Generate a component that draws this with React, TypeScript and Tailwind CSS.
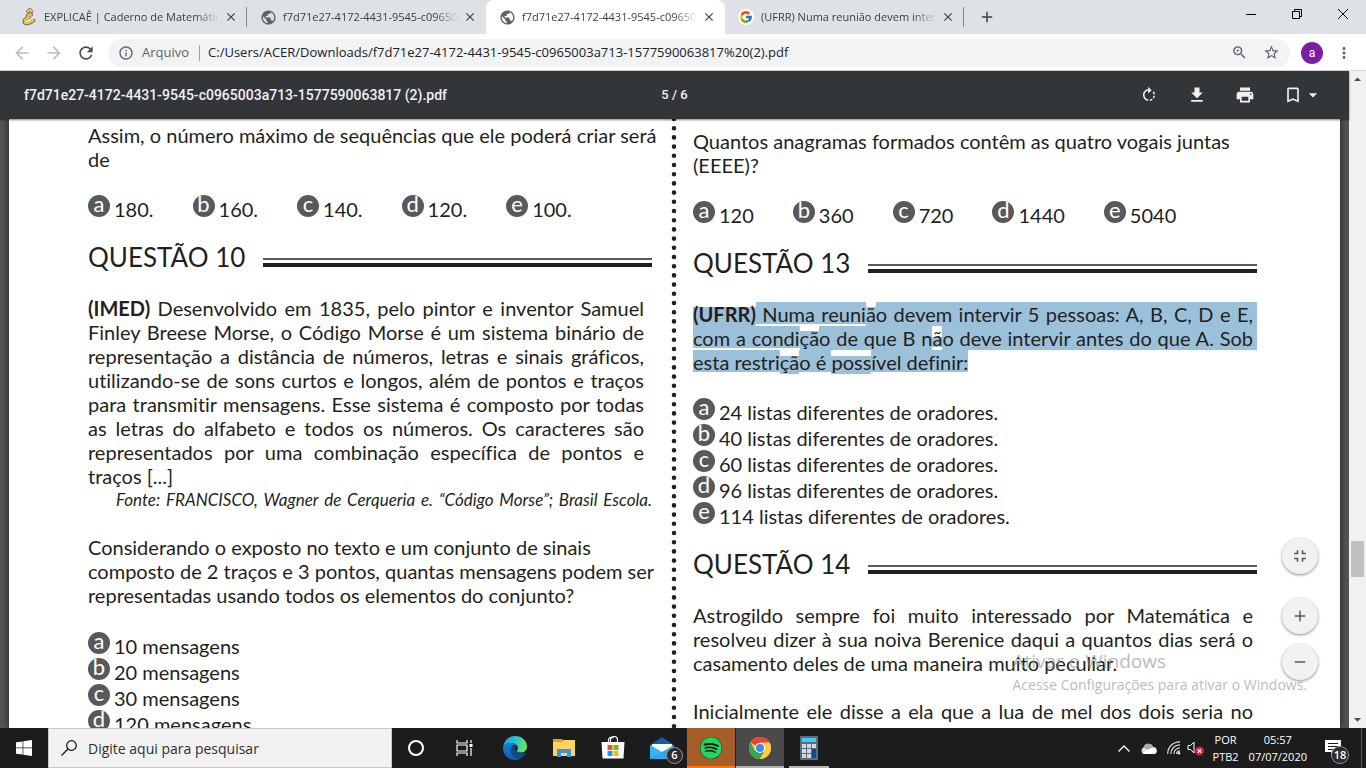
import type { ReactNode } from 'react';
import {
  MdAdd,
  MdArrowBack,
  MdArrowDropDown,
  MdArrowDropUp,
  MdArrowForward,
  MdBookmarkBorder,
  MdClose,
  MdFullscreenExit,
  MdGetApp,
  MdInfoOutline,
  MdMoreVert,
  MdPrint,
  MdPublic,
  MdRefresh,
  MdRemove,
  MdRotateRight,
  MdStarBorder,
  MdZoomIn,
} from 'react-icons/md';
import { FcGoogle } from 'react-icons/fc';
import { FaSpotify } from 'react-icons/fa';

const PDF_NAME = 'f7d71e27-4172-4431-9545-c0965003a713-1577590063817';

function ExplicaeIcon() {
  return (
    <svg viewBox="0 0 16 18" className="h-[18px] w-4" fill="none" strokeLinecap="round" strokeLinejoin="round">
      <path d="M6.500 3.500L9 1.500L11 3.500M10.500 7C11 5 6.500 5.500 6 8.500C6 10 8.500 9.500 8.500 9.500C4.500 10 2.500 12 3 14C3.500 17 9 16 13 12.500" stroke="#7b6a8e" strokeWidth="3" />
      <path d="M6.500 3.500L9 1.800L11 3.500M10 7C10.500 5.500 6.800 6 6.500 8.500C6.500 9.800 8.500 9.500 8.500 9.500C5 10 3.200 12 3.600 14C4 16.200 9 15.300 12.500 12.500" stroke="#f7d417" strokeWidth="1.800" />
    </svg>
  );
}

const tabs = [
  { icon: <ExplicaeIcon />, title: 'EXPLICAÊ | Caderno de Matemática' },
  { icon: <MdPublic className="size-[17px] text-[#5f6368]" />, title: PDF_NAME },
  { icon: <MdPublic className="size-[17px] text-[#5f6368]" />, title: PDF_NAME, active: true },
  {
    icon: (
      <span className="flex size-4 items-center justify-center rounded-full bg-white">
        <FcGoogle className="size-3.5" />
      </span>
    ),
    title: '(UFRR) Numa reunião devem intervir',
  },
];

function TabStrip() {
  return (
    <div className="flex h-[34px] shrink-0 bg-[#dee1e6] pl-2">
      {tabs.map((tab, i) => (
        <div key={i} className={`relative flex w-[239px] min-w-0 items-center pl-3 ${tab.active ? 'rounded-t-lg bg-white' : ''}`}>
          <span className="flex w-[18px] shrink-0 justify-center">{tab.icon}</span>
          <span className="ml-1.5 w-[176px] overflow-hidden whitespace-nowrap text-[11px] text-[#3c4043] [mask-image:linear-gradient(to_right,#000_86%,transparent)]">
            {tab.title}
          </span>
          <button aria-label="Fechar guia" className="ml-1 shrink-0">
            <MdClose className="size-3.5 text-[#3c4043]" />
          </button>
          {(i === 0 || i === 3) && <span className="absolute right-0 top-[7px] h-5 w-px bg-[#80868b]" />}
        </div>
      ))}
      <button aria-label="Nova guia" className="ml-3.5">
        <MdAdd className="size-[18px] text-[#3c4043]" />
      </button>
      <div className="ml-auto flex h-7">
        <button aria-label="Minimizar" className="flex w-[46px] items-center justify-center">
          <span className="h-px w-2.5 bg-black" />
        </button>
        <button aria-label="Restaurar" className="flex w-[46px] items-center justify-center">
          <svg viewBox="0 0 10 10" className="size-2.5" fill="none" stroke="#000">
            <path d="M.5 2.500h7v7h-7zM2.500 2.500v-2h7v7h-2" />
          </svg>
        </button>
        <button aria-label="Fechar" className="flex w-[46px] items-center justify-center">
          <svg viewBox="0 0 10 10" className="size-2.5" stroke="#000">
            <path d="M0 0l10 10M10 0L0 10" />
          </svg>
        </button>
      </div>
    </div>
  );
}

function Toolbar() {
  return (
    <div className="flex h-[37px] shrink-0 items-center border-b border-[#d5d7da] bg-white pl-3 pt-px text-[#5f6368]">
      <button aria-label="Voltar" className="text-[#babcbe]">
        <MdArrowBack className="size-5" />
      </button>
      <button aria-label="Avançar" className="ml-3 text-[#babcbe]">
        <MdArrowForward className="size-5" />
      </button>
      <button aria-label="Recarregar" className="ml-3 text-[#4a4d51]">
        <MdRefresh className="size-5" />
      </button>
      <div className="ml-3 flex h-7 min-w-0 flex-1 items-center rounded-full bg-[#f1f3f4] pl-2.5 pr-2.5">
        <MdInfoOutline className="size-4 shrink-0" />
        <span className="ml-2 text-[13px]">Arquivo</span>
        <span className="ml-2.5 h-4 w-px bg-[#9aa0a6]" />
        <input
          aria-label="Barra de endereço"
          className="ml-2 min-w-0 flex-1 bg-transparent text-[13px] text-[#202124] outline-none"
          defaultValue={`C:/Users/ACER/Downloads/${PDF_NAME}%20(2).pdf`}
        />
        <button aria-label="Zoom">
          <MdZoomIn className="size-[17px]" />
        </button>
        <button aria-label="Adicionar aos favoritos" className="ml-[15px]">
          <MdStarBorder className="size-[17px]" />
        </button>
      </div>
      <button className="ml-[11px] size-[22px] rounded-full bg-[#7b1fa2] font-['Roboto',sans-serif] text-[12px] leading-none text-white">
        a
      </button>
      <button aria-label="Menu" className="ml-3 mr-[13px]">
        <MdMoreVert className="size-[18px]" />
      </button>
    </div>
  );
}

function PdfToolbar() {
  return (
    <div className="z-10 flex h-12 shrink-0 items-center bg-[#323639] px-6 font-['Roboto',sans-serif] text-[14px] font-medium text-[#f1f1f1] shadow-[0_1px_2px_rgba(0,0,0,0.5)]">
      <span className="flex-1">{PDF_NAME} (2).pdf</span>
      <span className="text-[13px]">5 / 6</span>
      <div className="flex flex-1 items-center justify-end">
        <button aria-label="Girar">
          <MdRotateRight className="size-[18px]" />
        </button>
        <button aria-label="Baixar" className="ml-[29px]">
          <MdGetApp className="size-5" />
        </button>
        <button aria-label="Imprimir" className="ml-7">
          <MdPrint className="size-5" />
        </button>
        <button aria-label="Favoritos" className="ml-7 mr-0.5 flex items-center">
          <MdBookmarkBorder className="size-5" />
          <MdArrowDropDown className="size-5" />
        </button>
      </div>
    </div>
  );
}

function Heading({ children }: { children: ReactNode }) {
  return (
    <div className="flex gap-[18px]">
      <h2 className="text-[26px] leading-8">{children}</h2>
      <span className="mb-1.5 h-[9px] flex-1 self-end border-b-4 border-t-2 border-b-[#231f20] border-t-[#58595b]" />
    </div>
  );
}

function Letter({ children }: { children: string }) {
  return (
    <span className="flex size-[22px] shrink-0 items-center justify-center rounded-full bg-[#58595b] pb-1 text-[22px] leading-none text-white">
      {children}
    </span>
  );
}

function Options({ items, inline }: { items: string[]; inline?: boolean }) {
  return (
    <ul className={inline ? 'flex gap-[39px]' : ''}>
      {items.map((item, i) => (
        <li key={item} className="flex h-[26px] gap-1">
          <Letter>{'abcde'[i]}</Letter>
          <span className="whitespace-nowrap pt-0.5">{item}</span>
        </li>
      ))}
    </ul>
  );
}

// One printed line per entry, stretched to both margins
function Justified({ lines, last }: { lines: ReactNode[]; last?: ReactNode }) {
  return (
    <p>
      {lines.map((line, i) => (
        <span key={i} className="block whitespace-nowrap [text-align-last:justify]">
          {line}
        </span>
      ))}
      {last && <span className="block whitespace-nowrap">{last}</span>}
    </p>
  );
}

// Highlight boxes follow the font's glyph runs, so their heights differ
const marks = {
  full: 'bg-[#9bc1da]',
  top: 'bg-[linear-gradient(#9bc1da,#9bc1da)] bg-[length:100%_22px] bg-top bg-no-repeat',
  low: 'bg-[linear-gradient(#9bc1da,#9bc1da)] bg-[length:100%_19px] bg-bottom bg-no-repeat',
  mid: 'bg-[linear-gradient(#9bc1da,#9bc1da)] bg-[length:100%_10px] bg-[position:0_11px] bg-no-repeat',
  drop: 'bg-[linear-gradient(#9bc1da,#9bc1da)] bg-[length:100%_18px] bg-bottom bg-no-repeat',
  end: 'bg-[#9bc1da] pr-1 -mr-1',
};

function Mark({ kind, children }: { kind: keyof typeof marks; children: ReactNode }) {
  return <span className={marks[kind]}>{children}</span>;
}

function LeftColumn() {
  return (
    <div className="min-w-0 pt-1">
      <p className="whitespace-nowrap">
        Assim, o número máximo de sequências que ele poderá criar será
        <br />
        de
      </p>
      <div className="mt-6">
        <Options inline items={['180.', '160.', '140.', '120.', '100.']} />
      </div>
      <div className="mt-5">
        <Heading>QUESTÃO 10</Heading>
      </div>
      <div className="mt-[23px] pr-2">
        <Justified
          lines={[
            <><b>(IMED)</b> Desenvolvido em 1835, pelo pintor e inventor Samuel</>,
            'Finley Breese Morse, o Código Morse é um sistema binário de',
            'representação a distância de números, letras e sinais gráficos,',
            'utilizando-se de sons curtos e longos, além de pontos e traços',
            'para transmitir mensagens. Esse sistema é composto por todas',
            'as letras do alfabeto e todos os números. Os caracteres são',
            'representados por uma combinação específica de pontos e',
          ]}
          last="traços [...]"
        />
      </div>
      <p className="ml-7 mt-0.5 whitespace-nowrap text-[17px] italic leading-5 [text-align-last:justify]">
        Fonte: FRANCISCO, Wagner de Cerqueria e. “Código Morse”; Brasil Escola.
      </p>
      <p className="mt-[25px] whitespace-nowrap">
        Considerando o exposto no texto e um conjunto de sinais
        <br />
        composto de 2 traços e 3 pontos, quantas mensagens podem ser
        <br />
        representadas usando todos os elementos do conjunto?
      </p>
      <div className="mt-[25px]">
        <Options items={['10 mensagens', '20 mensagens', '30 mensagens', '120 mensagens']} />
      </div>
    </div>
  );
}

function RightColumn() {
  return (
    <div className="min-w-0 pt-2.5">
      <p>Quantos anagramas formados contêm as quatro vogais juntas (EEEE)?</p>
      <div className="mt-6">
        <Options inline items={['120', '360', '720', '1440', '5040']} />
      </div>
      <div className="mt-5">
        <Heading>QUESTÃO 13</Heading>
      </div>
      <div className="mt-[23px] pr-1">
        <Justified
          lines={[
            <>
              <Mark kind="low"><b>(UFRR)</b></Mark>
              <Mark kind="top"> Numa reuni</Mark>
              <Mark kind="low">ã</Mark>
              <Mark kind="end">o devem intervir 5 pessoas: A, B, C, D e E,</Mark>
            </>,
            <>
              <Mark kind="top">com a condi</Mark>
              <Mark kind="low">çã</Mark>
              <Mark kind="full">o de que B n</Mark>
              <Mark kind="mid">ã</Mark>
              <Mark kind="end">o deve intervir antes do que A. Sob</Mark>
            </>,
          ]}
          last={
            <>
              <Mark kind="top">esta restri</Mark>
              <Mark kind="drop">çã</Mark>
              <Mark kind="top">o é </Mark>
              <Mark kind="drop">poss</Mark>
              <Mark kind="top">ível definir:</Mark>
            </>
          }
        />
      </div>
      <div className="mt-6">
        <Options
          items={[
            '24 listas diferentes de oradores.',
            '40 listas diferentes de oradores.',
            '60 listas diferentes de oradores.',
            '96 listas diferentes de oradores.',
            '114 listas diferentes de oradores.',
          ]}
        />
      </div>
      <div className="mt-5">
        <Heading>QUESTÃO 14</Heading>
      </div>
      <div className="mt-[23px] pr-1">
        <Justified
          lines={[
            'Astrogildo sempre foi muito interessado por Matemática e',
            'resolveu dizer à sua noiva Berenice daqui a quantos dias será o',
          ]}
          last="casamento deles de uma maneira muito peculiar."
        />
      </div>
      <div className="mt-6 pr-1">
        <Justified lines={['Inicialmente ele disse a ela que a lua de mel dos dois seria no']} />
      </div>
    </div>
  );
}

function ZoomControls() {
  const round =
    'flex size-9 items-center justify-center rounded-full bg-[#f2f2f2] text-[#5a5a5a] shadow-[0_1px_3px_rgba(0,0,0,0.45)]';
  return (
    <div className="absolute bottom-12 right-[31px] flex flex-col">
      <button aria-label="Ajustar à página" className={round}>
        <MdFullscreenExit className="size-5" />
      </button>
      <button aria-label="Mais zoom" className={`mt-6 ${round}`}>
        <MdAdd className="size-[18px]" />
      </button>
      <button aria-label="Menos zoom" className={`mt-2.5 ${round}`}>
        <MdRemove className="size-[18px]" />
      </button>
    </div>
  );
}

function PdfViewer() {
  return (
    <div className="relative flex min-w-0 flex-1 flex-col">
      <PdfToolbar />
      <div className="min-h-0 flex-1 overflow-hidden bg-[#525659] px-[9px]">
        <div className="grid h-full grid-cols-[minmax(0,1fr)_41px_minmax(0,1fr)] bg-white pl-[79px] pr-[83px] font-['Lato',sans-serif] text-[20px] leading-6 text-[#231f20] shadow-[0_0_8px_rgba(0,0,0,0.7)] [font-variant-ligatures:none]">
          <LeftColumn />
          <svg className="h-full w-full overflow-visible">
            <line x1="22" y1="0" x2="22" y2="100%" stroke="#231f20" strokeWidth="4.600" strokeLinecap="round" strokeDasharray="0 9.200" />
          </svg>
          <RightColumn />
        </div>
      </div>
      <ZoomControls />
      <div className="pointer-events-none absolute bottom-[33px] right-[42px] text-[#8a8a8a]/60">
        <p className="text-[19px] leading-7">Ativar o Windows</p>
        <p className="text-[14px] leading-5">Acesse Configurações para ativar o Windows.</p>
      </div>
    </div>
  );
}

function Scrollbar() {
  return (
    <div className="flex w-[17px] shrink-0 flex-col items-center bg-[#f1f1f1] text-[#505050]">
      <MdArrowDropUp className="size-[17px] shrink-0" />
      <span className="grow-[453]" />
      <span className="h-9 w-[13px] bg-[#c1c1c1]" />
      <span className="grow-[134]" />
      <MdArrowDropDown className="size-[17px] shrink-0" />
    </div>
  );
}

function EdgeIcon() {
  return (
    <svg viewBox="0 0 24 24" className="size-6">
      <defs>
        <linearGradient id="edgeTop" x1="0" y1=".3" x2="1" y2=".5">
          <stop offset="0" stopColor="#1b9de2" />
          <stop offset=".5" stopColor="#2cc3d5" />
          <stop offset="1" stopColor="#6be35e" />
        </linearGradient>
        <linearGradient id="edgeLow" x1="0" y1="0" x2=".6" y2="1">
          <stop offset="0" stopColor="#1684d8" />
          <stop offset="1" stopColor="#0c59a4" />
        </linearGradient>
      </defs>
      <path d="M.2 10.500C1 4.500 6 0 12 0c7 0 12 5 12 10.500 0 4-3 6-6.200 6-2.500 0-4-.8-4-1.600 0-.6 1-1.200 1-3C14.800 9.500 12.500 7 8.500 7 4 7 1 9.500.2 10.500z" fill="url(#edgeTop)" />
      <path d="M.1 11C1 8.500 4.500 7 8 7c2.500 0 4.500.8 5.600 2.200C10.500 8.500 8 10.500 8 14c0 5 5 9 10.500 7.800C16.500 23.200 14.300 24 12 24 5 24-.6 18.500.1 11z" fill="url(#edgeLow)" />
      <path d="M13.600 9.200C10 9 8 11.300 8 14.500c0 5 5.500 9 10.700 7 1.800-1 3.200-2.500 4.200-4.200.2-.5-.2-.7-.7-.5-5.200 2-9.700-.3-10-3.800-.1-1.700.6-3 1.400-3.800z" fill="#114a8b" />
    </svg>
  );
}

function FolderIcon() {
  return (
    <svg viewBox="0 0 22 18" className="h-[18px] w-[22px]">
      <path d="M0 0h9l1.500 2H22v4H0z" fill="#e0a11b" />
      <path d="M0 3h9l1.500-2H22v16H0z" fill="#fcd462" />
      <path d="M4 18v-8h14v8h-4v-4H8v4z" fill="#3f93dc" />
    </svg>
  );
}

function StoreIcon() {
  return (
    <svg viewBox="0 0 24 24" className="size-6">
      <path d="M7.500 6.500V4.500a3 3 0 0 1 5-2.500M9.500 6.500V4a3.500 3.500 0 0 1 7 0v2.500" fill="none" stroke="#fff" strokeWidth="1.200" />
      <path d="M.5 6h23l-1 16.500H1.500z" fill="#fff" />
      <path d="M6.500 9h5v5h-5z" fill="#f25022" />
      <path d="M12.500 9h5v5h-5z" fill="#7fba00" />
      <path d="M6.500 15h5v5h-5z" fill="#00a4ef" />
      <path d="M12.500 15h5v5h-5z" fill="#ffb900" />
    </svg>
  );
}

function MailIcon() {
  return (
    <svg viewBox="0 0 24 22" className="h-[22px] w-6">
      <path d="M0 8l12-8 12 8v14H0z" fill="#0f5fa8" />
      <path d="M2 7h20v9H2z" fill="#fff" />
      <path d="M0 8l12 8-12 6z" fill="#1a86d6" />
      <path d="M24 8L0 22h24z" fill="#2ba9ec" />
      <path d="M0 8l12 7 5-2.500L0 22z" fill="#35b5f1" />
    </svg>
  );
}

function ChromeIcon() {
  return (
    <svg viewBox="0 0 24 24" className="size-[22px]">
      <circle cx="12" cy="12" r="12" fill="#ffcd40" />
      <path d="M12 12L1.600 6A12 12 0 0 1 22.400 6H12z" fill="#ea4335" />
      <path d="M1.600 6A12 12 0 0 0 12 24l5.200-9L12 12 6.800 15z" fill="#34a853" />
      <path d="M12 6.500h10.700A12 12 0 0 1 12 24l5-9z" fill="#ffcd40" />
      <circle cx="12" cy="12" r="5.500" fill="#fff" />
      <circle cx="12" cy="12" r="4.400" fill="#4285f4" />
    </svg>
  );
}

function CalculatorIcon() {
  return (
    <svg viewBox="0 0 18 24" className="h-6 w-[18px]">
      <rect width="18" height="24" rx="1" fill="#5f6b78" />
      <path d="M2 2h14v4H2z" fill="#40c8f4" />
      <path d="M2 8h4v4H2zM7 8h4v4H7zM12 8h4v4h-4zM2 13h4v4H2zM7 13h4v4H7zM2 18h4v4H2zM7 18h4v4H7z" fill="#d3d8de" />
      <path d="M12 13h4v9h-4z" fill="#0f4b8c" />
    </svg>
  );
}

function TaskViewIcon() {
  return (
    <svg viewBox="0 0 17 16" className="h-4 w-[17px]" fill="none" stroke="#fff" strokeWidth="1.200">
      <path d="M1 0v3h10V0M1 16v-3h10v3M1 5h10v6H1zM15 0v3M15 8v8" />
      <path d="M13.500 4h3v3h-3z" fill="#fff" stroke="none" />
    </svg>
  );
}

const apps = [
  { label: 'Microsoft Edge', icon: <EdgeIcon /> },
  { label: 'Explorador de Arquivos', icon: <FolderIcon /> },
  { label: 'Microsoft Store', icon: <StoreIcon /> },
  { label: 'Email', icon: <MailIcon />, badge: '6' },
  {
    label: 'Spotify',
    icon: (
      <span className="rounded-full bg-[#191414]">
        <FaSpotify className="size-[22px] text-[#1ed760]" />
      </span>
    ),
    className: 'bg-[#a65e28] border-b-[#ff7a00]',
  },
  { label: 'Google Chrome', icon: <ChromeIcon />, className: 'bg-[#4a4a4a] border-b-[#b5b5b5]' },
  { label: 'Calculadora', icon: <CalculatorIcon />, open: true },
];

function Tray() {
  return (
    <div className="ml-auto flex h-full items-center text-white">
      <button aria-label="Mostrar ícones ocultos">
        <svg viewBox="0 0 12 7" className="h-[7px] w-3" fill="none" stroke="#fff" strokeWidth="1.300">
          <path d="M.5 6.500L6 1l5.500 5.500" />
        </svg>
      </button>
      <svg viewBox="0 0 17 11" className="ml-2.5 h-[11px] w-[17px]">
        <path d="M4 11a3.500 3.500 0 0 1-.5-6.500A5 5 0 0 1 13 4a3.500 3.500 0 0 1 .5 7z" fill="#ddd" />
        <path d="M3.500 4.500A5 5 0 0 1 13 4L8 6.500z" fill="#aaa" />
        <path d="M2 10l9-4.500a4 4 0 0 1 5.500 3c0 1.500-1 2.500-3 2.500H4z" fill="#fff" />
      </svg>
      <svg viewBox="0 0 14 14" className="ml-2.5 size-3.5" fill="none" stroke="#ddd" strokeWidth="1.200">
        <path d="M.7 13A12 12 0 0 1 13 .8M3.800 13A9 9 0 0 1 13 3.900M6.800 13A6 6 0 0 1 13 7M9.500 13A3.500 3.500 0 0 1 13 9.800" />
        <circle cx="12" cy="12.200" r="1.200" fill="#fff" stroke="none" />
      </svg>
      <svg viewBox="0 0 18 16" className="ml-1.5 h-4 w-[18px]" fill="none">
        <path d="M1 5.500h2.500L7 2v11l-3.500-3.500H1z" stroke="#fff" />
        <circle cx="12.500" cy="11" r="4.500" fill="#d9202a" />
        <path d="M10.800 9.300l3.400 3.400M14.200 9.300l-3.400 3.400" stroke="#fff" strokeWidth="1.300" />
      </svg>
      <div className="ml-2 text-center text-[11px] leading-[17px]">
        <p>POR</p>
        <p>PTB2</p>
      </div>
      <div className="ml-2.5 text-center text-[11px] leading-[17px]">
        <p>05:57</p>
        <p>07/07/2020</p>
      </div>
      <button aria-label="Notificações" className="relative ml-[18px] mr-2 h-full w-7">
        <svg viewBox="0 0 16 16" className="size-4" fill="none">
          <path d="M0 0h16v12h-7l-3 3.500V12H0z" fill="#fff" />
          <path d="M3 3.500h10M3 6.500h10M3 9.500h7" stroke="#1c1c1c" />
        </svg>
        <span className="absolute bottom-1 right-1 flex size-[18px] items-center justify-center rounded-full border border-[#8d8d8d] bg-[#2b2b2b] text-[11px] font-semibold">
          18
        </span>
      </button>
      <span className="mr-1 h-full w-px bg-[#5c5c5c]" />
    </div>
  );
}

function Taskbar() {
  return (
    <div className="flex h-10 shrink-0 items-center bg-[#1c1c1c]">
      <button aria-label="Iniciar" className="flex w-12 justify-center">
        <svg viewBox="0 0 16 16" className="size-4" fill="#fff">
          <path d="M0 2.300l6.600-.9v6.200H0zM7.300 1.300L16 0v7.600H7.300zM0 8.300h6.600v6.300L0 13.700zM7.300 8.300H16V16l-8.700-1.200z" />
        </svg>
      </button>
      <label className="flex h-full w-[344px] items-center border border-[#c8c8c8] bg-[#f2f2f2] pl-3">
        <svg viewBox="0 0 16 16" className="size-4" fill="none" stroke="#111" strokeWidth="1.200">
          <circle cx="10.500" cy="5.500" r="4.800" />
          <path d="M7 9L.5 15.500" />
        </svg>
        <input
          aria-label="Pesquisar"
          placeholder="Digite aqui para pesquisar"
          className="ml-[11px] min-w-0 flex-1 bg-transparent text-[14px] outline-none placeholder:text-[#2f2f2f]"
        />
      </label>
      <button aria-label="Cortana" className="flex w-12 justify-center">
        <span className="size-4 rounded-full border-2 border-white" />
      </button>
      <button aria-label="Visão de tarefas" className="flex w-12 justify-center">
        <TaskViewIcon />
      </button>
      <div className="ml-[3px] flex h-full gap-px">
        {apps.map((app) => (
          <button
            key={app.label}
            aria-label={app.label}
            className={`relative flex h-full w-12 items-center justify-center border-b-2 pt-0.5 ${app.className ?? 'border-b-transparent'}`}
          >
            {app.icon}
            {app.badge && (
              <span className="absolute bottom-0.5 right-[3px] flex size-[17px] items-center justify-center rounded-full border border-[#9a9a9a] bg-[#2b2b2b] text-[11px] font-semibold text-white">
                {app.badge}
              </span>
            )}
            {app.open && <span className="absolute -bottom-0.5 left-1 right-1 h-0.5 bg-[#b5b5b5]" />}
          </button>
        ))}
      </div>
      <Tray />
    </div>
  );
}

export default function App() {
  return (
    <div className="flex h-screen flex-col overflow-hidden font-['Open_Sans',sans-serif]">
      <TabStrip />
      <Toolbar />
      <main className="flex min-h-0 flex-1">
        <PdfViewer />
        <Scrollbar />
      </main>
      <Taskbar />
    </div>
  );
}
